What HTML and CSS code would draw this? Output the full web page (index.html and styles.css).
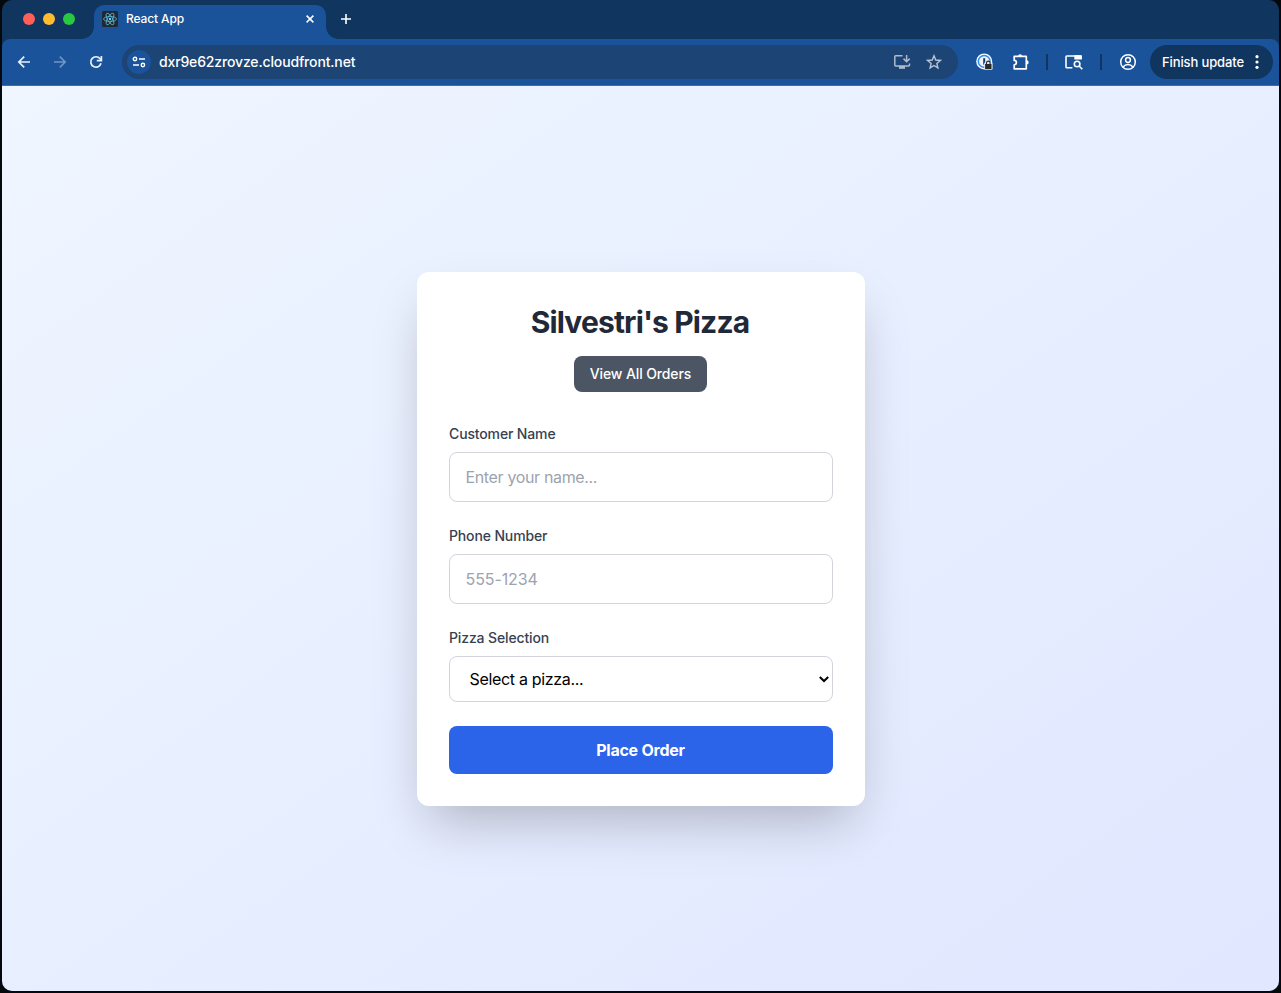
FILE: index.html
```html
<!DOCTYPE html>
<html lang="en">
<head>
<meta charset="utf-8">
<title>React App</title>
<link rel="stylesheet" href="styles.css">
</head>
<body>
<div class="window">
  <header class="tabstrip">
    <div class="lights"><i class="light red"></i><i class="light yellow"></i><i class="light green"></i></div>
    <div class="tab">
      <svg class="favicon" width="16" height="16" viewBox="0 0 16 16" fill="none" stroke="#58bfdc" stroke-width=".8"><rect width="16" height="16" rx="1.5" fill="#23272f" stroke="none"/><circle cx="8" cy="8" r="1.2" fill="#61dafb" stroke="none"/><ellipse cx="8" cy="8" rx="6.5" ry="2.5"/><ellipse cx="8" cy="8" rx="6.5" ry="2.5" transform="rotate(60 8 8)"/><ellipse cx="8" cy="8" rx="6.5" ry="2.5" transform="rotate(120 8 8)"/></svg>
      <span class="tab-title">React App</span>
      <svg class="tab-close" width="8" height="8" viewBox="0 0 8 8" stroke="#fff" stroke-width="1.5"><path d="M.6.6l6.8 6.8M7.4.6L.6 7.4"/></svg>
    </div>
    <svg class="new-tab" width="10" height="10" viewBox="0 0 10 10" stroke="#fff" stroke-width="1.6"><path d="M5 0v10M0 5h10"/></svg>
  </header>
  <nav class="toolbar">
    <svg class="back" width="16" height="16" viewBox="0 0 16 16" fill="none" stroke="#e9f0fa" stroke-width="1.7"><path d="M14 8H3M8.2 2.6L2.8 8l5.4 5.4"/></svg>
    <svg class="forward" width="16" height="16" viewBox="0 0 16 16" fill="none" stroke="#7197c9" stroke-width="1.5"><path d="M2 8h11M7.8 2.6L13.2 8l-5.4 5.4"/></svg>
    <svg class="reload" width="16" height="16" viewBox="0 0 16 16" fill="none" stroke="#e9f0fa" stroke-width="1.7"><path d="M13 9.3A5.2 5.2 0 1 1 12.1 4.8L13 6"/><path d="M13.4 2v4.6H8.8"/></svg>
    <div class="omnibox">
      <span class="site-info"><svg width="14" height="12" viewBox="0 0 14 12" fill="none" stroke="#fff" stroke-width="1.4"><circle cx="3" cy="3" r="1.7"/><path d="M7 3h6M1 9h6"/><circle cx="10.9" cy="9" r="1.7"/></svg></span>
      <span class="url">dxr9e62zrovze.cloudfront.net</span>
      <svg class="install" width="18" height="16" viewBox="0 0 18 16" fill="none" stroke="#aebccd" stroke-width="1.5"><path d="M9.5 1.8H2.6Q1.8 1.8 1.8 2.6v8.5q0 .9.8.9h13q.9 0 .9-.9V9.5M13.6 1v6.4M10.5 4.6l3.1 3.1 3.1-3.1"/><path d="M6 12h6v2.8H6z" fill="#aebccd" stroke="none"/></svg>
      <svg class="star" width="16" height="16" viewBox="0 0 16 16" fill="none" stroke="#b8c4d3" stroke-width="1.4"><path d="M8 1.8l1.75 4.25 4.6.38-3.5 3 1.07 4.5L8 11.5l-3.92 2.43 1.07-4.5-3.5-3 4.6-.38z"/></svg>
    </div>
    <svg class="password" width="18" height="18" viewBox="0 0 18 18"><circle cx="8.2" cy="8.4" r="8" fill="#fff"/><circle cx="8.2" cy="8.4" r="5.9" fill="#edf4fc" stroke="#338ce9" stroke-width="1.5"/><path d="M7.2 5.2h2v6.4h-2z" fill="#173962"/><rect x="8.2" y="9.2" width="8.4" height="7.6" rx="1.4" fill="#e4e9ef"/><path d="M9.1 11h6.4v5H9.1z" fill="#292929"/><path d="M10.5 11.2V9.9a1.8 1.8 0 0 1 3.6 0v1.3" fill="none" stroke="#292929" stroke-width="1.1"/></svg>
    <svg class="puzzle" width="18" height="18" viewBox="0 0 18 18" fill="none" stroke="#fff" stroke-width="1.7" stroke-linejoin="round"><path d="M2.2 3.4h12.1v12.4H2.2v-4a2.2 2.2 0 0 0 0-4.4z"/><path d="M6.1 3.2a2 2 0 0 1 4 0zM14.6 7.3a2.1 2.1 0 0 1 0 4.2z" fill="#fff" stroke="none"/></svg>
    <i class="divider"></i>
    <svg class="tab-search" width="20" height="16" viewBox="0 0 20 16" fill="none" stroke="#fff" stroke-width="1.6"><path d="M8.4 13.8H2.9Q2 13.8 2 13V2.8Q2 2 2.8 2h13.4q.8 0 .8.8V5"/><path d="M10.3 1.2h7.5v4.3h-7.5z" fill="#fff" stroke="none"/><circle cx="13.1" cy="10" r="2.8"/><path d="M15.1 12l3.2 3.2"/></svg>
    <i class="divider second"></i>
    <svg class="profile" width="18" height="18" viewBox="0 0 18 18" fill="none" stroke="#fff" stroke-width="1.5"><circle cx="9" cy="9" r="7.3"/><circle cx="9" cy="7" r="2.4"/><path d="M4 14q2-2.4 5-2.4t5 2.4"/></svg>
    <div class="update"><span class="update-text">Finish update</span><svg width="4" height="16" viewBox="0 0 4 16" fill="#fff"><circle cx="2" cy="2.7" r="1.6"/><circle cx="2" cy="8" r="1.6"/><circle cx="2" cy="13.3" r="1.6"/></svg></div>
  </nav>
  <main class="page">
    <section class="card">
      <h1 class="title">Silvestri's Pizza</h1>
      <button class="orders">View All Orders</button>
      <form class="form">
        <div class="field"><label class="label" for="name">Customer Name</label><input class="input" id="name" placeholder="Enter your name..."></div>
        <div class="field"><label class="label" for="phone">Phone Number</label><input class="input phone" id="phone" placeholder="555-1234"></div>
        <div class="field"><label class="label" for="pizza">Pizza Selection</label>
          <div class="select" id="pizza"><span class="select-text">Select a pizza...</span><svg width="10" height="7" viewBox="0 0 10 7" fill="none" stroke="#000" stroke-width="2"><path d="M.8 1l4.2 4L9.2 1"/></svg></div></div>
        <button class="submit" type="button">Place Order</button>
      </form>
    </section>
  </main>
</div>
</body>
</html>
```
FILE: styles.css
```css
* { box-sizing: border-box; }
body { margin: 0; height: 993px; padding: 0 2px 2px; background: #05080c; overflow: hidden; font-family: Inter, "Liberation Sans", sans-serif; }
svg { display: block; flex: none; }
button, input { font-family: inherit; }
.window { height: 991px; display: flex; flex-direction: column; border-radius: 10px; overflow: hidden; background: #10355f; }
.tabstrip { height: 39px; display: flex; align-items: flex-start; }
.lights { display: flex; gap: 8px; padding: 13px 0 0 21px; width: 92px; }
.light { width: 12px; height: 12px; border-radius: 50%; }
.red { background: #ff5f57; }
.yellow { background: #febc2e; }
.green { background: #28c840; }
.tab { position: relative; width: 232px; height: 34px; margin-top: 5px; padding: 0 12px 6px 8px; display: flex; align-items: center; background: #1a5399; border-radius: 10px 10px 0 0; }
.tab::before, .tab::after { content: ""; position: absolute; bottom: 0; width: 12px; height: 12px; }
.tab::before { left: -12px; background: radial-gradient(circle at 0 0, transparent 11.5px, #1a5399 12px); }
.tab::after { right: -12px; background: radial-gradient(circle at 100% 0, transparent 11.5px, #1a5399 12px); }
.tab-title { margin-left: 8px; padding-bottom: 1px; font-size: 12px; font-weight: 550; letter-spacing: -.12px; color: #fff; white-space: nowrap; }
.tab-close { margin-left: auto; }
.new-tab { margin: 14px 0 0 15px; }
.toolbar { height: 47px; display: flex; align-items: center; padding: 0 6px 1px 14px; background: #1a5399; border-bottom: 1px solid #3b6eab; border-radius: 8px 8px 0 0; }
.forward { margin-left: 20px; }
.reload { margin-left: 20px; }
.omnibox { display: flex; align-items: center; width: 836px; height: 34px; margin-left: 18px; padding: 0 16px 0 5px; border-radius: 17px; background: #1c4475; }
.site-info { display: grid; place-items: center; width: 24px; height: 24px; border-radius: 50%; background: #1a5399; }
.url { margin-left: 8px; color: #fff; font-size: 14px; font-weight: 450; letter-spacing: -.15px; white-space: nowrap; }
.install { margin-left: auto; }
.star { margin-left: 15px; }
.password { margin-left: 18px; }
.puzzle { margin-left: 18px; }
.divider { width: 2px; height: 16px; margin-left: 16px; background: #10355f; }
.tab-search { margin-left: 16px; }
.second { margin-left: 16px; }
.profile { margin-left: 17px; }
.update { display: flex; align-items: center; justify-content: space-between; width: 123px; height: 34px; margin-left: auto; padding: 0 14px 0 12px; border-radius: 17px; background: #10355f; }
.update-text { color: #fff; font-size: 13px; font-weight: 500; letter-spacing: -.12px; white-space: nowrap; }
.page { flex: 1; display: flex; align-items: center; justify-content: center; padding: 1px 0 0 1px; background: linear-gradient(to bottom right, #eff6ff, #e0e7ff); }
.card { width: 448px; height: 534px; padding: 32px; display: flex; flex-direction: column; align-items: center; background: #fff; border-radius: 12px; box-shadow: 0 25px 50px -12px rgba(0, 0, 0, .25); }
.title { margin: 0; padding-right: 2px; font-size: 30px; line-height: 36px; font-weight: 700; letter-spacing: -.85px; color: #1f2937; white-space: nowrap; }
.orders { width: 133px; height: 36px; margin: 16px 1px 32px 0; padding: 0; border: 0; border-radius: 8px; background: #4b5563; color: #fff; font-size: 14px; line-height: 20px; font-weight: 550; letter-spacing: -.12px; white-space: nowrap; }
.form { width: 384px; display: flex; flex-direction: column; gap: 24px; }
.field { display: flex; flex-direction: column; gap: 8px; }
.label { font-size: 14px; line-height: 20px; font-weight: 500; letter-spacing: -.14px; color: #374151; }
.input { height: 50px; padding: 12px 15.5px; border: 1px solid #d1d5db; border-radius: 8px; background: #fff; font-size: 16px; line-height: 24px; letter-spacing: -.35px; }
.phone { letter-spacing: -.1px; }
.input::placeholder { color: #9ca3af; }
.select { height: 46px; display: flex; align-items: center; justify-content: space-between; padding: 0 3px 0 19.5px; border: 1px solid #d1d5db; border-radius: 8px; font-size: 16px; letter-spacing: -.32px; color: #000; }
.submit { height: 48px; padding: 0 1px 0 0; border: 0; border-radius: 8px; background: #2b63e9; color: #fff; font-size: 16px; line-height: 24px; font-weight: 650; letter-spacing: -.24px; }
```
